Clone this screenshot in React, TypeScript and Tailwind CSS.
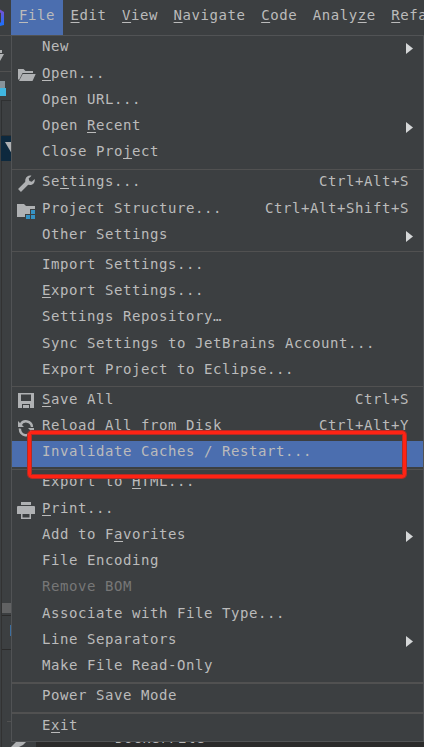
import type { ReactNode } from "react";

type Row = { h?: number; label: string; m?: number; key2?: string; sub?: boolean; off?: boolean; hot?: boolean; icon?: ReactNode };

const FolderOpen = (
  <svg className="absolute left-[6px] top-[5px]" width="19" height="15" viewBox="0 0 19 15" fill="#afb1b3">
    <path d="M0 11V1h5.500l2 2H15v2H4.500L1 12z" />
    <path d="M4.700 6H17.700L14.500 13H1z" />
  </svg>
);
const Wrench = (
  <svg className="absolute left-[5px] top-[4px]" width="19" height="18" viewBox="0 0 19 18" fill="none">
    <path d="M2.500 15.500L11 7" stroke="#afb1b3" strokeWidth="4" />
    <path d="M14.500 .8L11.700 3.600 12.400 6 14.800 6.700 17.600 3.900C18.400 7 16.200 10 13 10 9.500 10 7.500 7 8.500 4 9.300 1.300 12 0 14.500 .8z" fill="#afb1b3" />
  </svg>
);
const Structure = (
  <svg className="absolute left-[5px] top-[5px]" width="19" height="17" viewBox="0 0 19 17">
    <path d="M0 1h7l2 2h9v3h-5v5H8v3H0z" fill="#afb1b3" />
    <path d="M14 7h4v4h-4zM9 12h4v4H9zM14 12h4v4h-4z" fill="#3592c4" />
  </svg>
);
const Save = (
  <svg className="absolute left-[6px] top-[3px]" width="17" height="17" viewBox="0 0 17 17" fill="#afb1b3">
    <path fillRule="evenodd" d="M0 1h16v15H0zM3 2.500v6.500h10V2.500zM4 12v4h1v-3h6v3h1v-4z" />
    <path d="M6 13h1.500v3H6z" />
  </svg>
);
const Reload = (
  <svg className="absolute left-[6px] top-[5px]" width="17" height="17" viewBox="0 0 17 17" fill="none" stroke="#afb1b3" strokeWidth="2.400">
    <path d="M2.500 5A6 6 0 0 1 14 7M14 10A6 6 0 0 1 2 8.500" />
    <path d="M0 1v6h6zM16 14V8h-6z" fill="#afb1b3" stroke="none" />
  </svg>
);
const Print = (
  <svg className="absolute left-[5px] top-[4px]" width="19" height="17" viewBox="0 0 19 17" fill="#afb1b3">
    <path d="M4 0h10v3H4zM0 5q0-1 1-1h16q1 0 1 1v7H0z" />
    <path d="M4 10h10v7H4z" />
    <path d="M5.500 12h7v3.500h-7z" fill="#3c3f41" />
  </svg>
);

const groups: Row[][] = [
  [
    { h: 27, label: "New", sub: true },
    { label: "Open...", m: 0, icon: FolderOpen },
    { label: "Open URL..." },
    { label: "Open Recent", m: 5, sub: true },
    { label: "Close Project", m: 9 },
  ],
  [
    { h: 27, label: "Settings...", m: 2, key2: "Ctrl+Alt+S", icon: Wrench },
    { label: "Project Structure...", key2: "Ctrl+Alt+Shift+S", icon: Structure },
    { label: "Other Settings", sub: true },
  ],
  [
    { label: "Import Settings..." },
    { label: "Export Settings...", m: 0 },
    { h: 27, label: "Settings Repository…" },
    { label: "Sync Settings to JetBrains Account..." },
    { label: "Export Project to Eclipse..." },
  ],
  [
    { label: "Save All", m: 0, key2: "Ctrl+S", icon: Save },
    { label: "Reload All from Disk", key2: "Ctrl+Alt+Y", icon: Reload },
    { label: "Invalidate Caches / Restart...", hot: true },
  ],
  [
    { h: 27, label: "Export to HTML...", m: 10 },
    { label: "Print...", m: 0, icon: Print },
    { label: "Add to Favorites", m: 8, sub: true },
    { label: "File Encoding" },
    { h: 27, label: "Remove BOM", off: true },
    { label: "Associate with File Type..." },
    { label: "Line Separators", sub: true },
    { label: "Make File Read-Only" },
  ],
  [{ label: "Power Save Mode" }],
  [{ label: "Exit", m: 1 }],
];

const separators = ["", "pt-[2px]", "pt-px", "pt-px", "pt-[2px]", "pt-px", "pt-px"];

const bar: [string, number][] = [["File", 0], ["Edit", 0], ["View", 0], ["Navigate", 0], ["Code", 0], ["Analyze", 5], ["Refactor", 0]];

function Label({ text, m }: { text: string; m?: number }) {
  if (m === undefined) return <>{text}</>;
  return (
    <>
      {text.slice(0, m)}
      <span className="underline decoration-1 underline-offset-2 [text-decoration-skip-ink:none]">{text[m]}</span>
      {text.slice(m + 1)}
    </>
  );
}

function MenuRow({ r }: { r: Row }) {
  return (
    <div className={`relative flex shrink-0 justify-between pl-[30px] pr-[14px] leading-[21px] ${r.h ? "h-[27px]" : "h-[26px]"} ${r.hot ? "bg-[#4b6eaf]" : ""} ${r.off ? "text-[#777777]" : ""}`}>
      {r.icon}
      <span><Label text={r.label} m={r.m} /></span>
      {r.key2 && <span>{r.key2}</span>}
      {r.sub && (
        <svg className="-mr-[4px] mt-[7px]" width="7" height="12" viewBox="0 0 7 12">
          <path d="M0 0L7 5.500 0 11z" fill="#d5d7d8" />
        </svg>
      )}
    </div>
  );
}

function LeftStrip() {
  return (
    <div className="flex w-[11px] shrink-0 flex-col overflow-hidden">
      <div className="h-[36px] border-b border-[#515151]">
        <svg width="11" height="35" viewBox="0 0 11 35">
          <defs>
            <linearGradient id="logo" x1="0" y1="0" x2="0" y2="1">
              <stop offset="0" stopColor="#7b4fd0" />
              <stop offset="1" stopColor="#1673ff" />
            </linearGradient>
          </defs>
          <path d="M0 9.500L4 12V25L0 26V23L1 22V13L0 12.500z" fill="url(#logo)" />
        </svg>
      </div>
      <div className="h-[36px] border-b border-[#515151]">
        <svg width="11" height="35" viewBox="0 0 11 35" fill="#afb1b3">
          <path d="M0 14h2v3H0zM0 18h4L0 25z" />
        </svg>
      </div>
      <div className="h-[28px] pt-[9px]">
        <div className="h-[7px] w-[5px] bg-[#87939a]" />
        <div className="h-[8px] w-[6px] bg-[#40b6e0]" />
      </div>
      <div className="ml-px h-[36px] border-b border-l border-t border-[#2f3132]" />
      <div className="ml-px flex h-[25px] bg-[#0d293e]">
        <svg width="10" height="25" viewBox="0 0 10 25">
          <path d="M4 6h7v12z" fill="#afb1b3" />
        </svg>
      </div>
      <div className="ml-px flex grow flex-col border-l border-[#323232]">
        <div className="mt-[442px] h-[10px] w-[9px] bg-[#616263]" />
        <div className="mt-[2px] h-px bg-[#2b2b2b]" />
        <div className="ml-[8px] mt-[9px] h-[11px] w-px bg-[#3b6ea0]" />
        <div className="mt-[13px] h-px bg-[#2b2b2b]" />
        <div className="ml-[5px] mt-[71px] h-px bg-[#515151]" />
      </div>
    </div>
  );
}

export default function App() {
  return (
    <div className="relative flex h-[747px] w-[424px] overflow-hidden bg-[#3c3f41] font-['DejaVu_Sans_Mono',monospace] text-[14px] tracking-[0.572px] whitespace-pre text-[#bbbbbb]">
      <LeftStrip />
      <div className="flex w-[413px] shrink-0 flex-col">
        <div className="flex h-[35px] shrink-0 overflow-hidden leading-[31px]">
          {bar.map(([t, m], i) => (
            <div key={t} className={`shrink-0 pl-[8px] pr-[7.5px] ${i === 0 ? "bg-[#4b6eaf]" : ""}`}>
              <Label text={t} m={m} />
            </div>
          ))}
        </div>
        <div className="flex h-[707px] shrink-0 flex-col border border-[#515355]">
          {groups.map((g, i) => (
            <div key={i} className="flex flex-col">
              {i > 0 && (
                <div className={`h-[4px] ${separators[i]}`}>
                  <div className={`bg-[#515151] ${i > 4 ? "h-[2px]" : "h-px"}`} />
                </div>
              )}
              {g.map((r) => <MenuRow key={r.label} r={r} />)}
            </div>
          ))}
        </div>
        <div className="flex h-[5px] overflow-hidden">
          <div className="w-[25px] shrink-0">
            <svg width="25" height="5" viewBox="0 0 25 5"><path d="M0 5L5 0H15L12 3 8 5z" fill="#afb1b3" /></svg>
          </div>
          <div className="grow bg-[#2b2b2b] pl-[79px]"><div className="-mt-[12px] leading-[16px]">DockerFile</div></div>
        </div>
      </div>
      <div className="absolute left-[28px] top-[431px] h-[47px] w-[378px] rounded-[4px] border-[3px] border-[#ff2314] shadow-[0_0_0_1px_#b52b24,inset_0_0_0_1px_#b52b24]" />
    </div>
  );
}
